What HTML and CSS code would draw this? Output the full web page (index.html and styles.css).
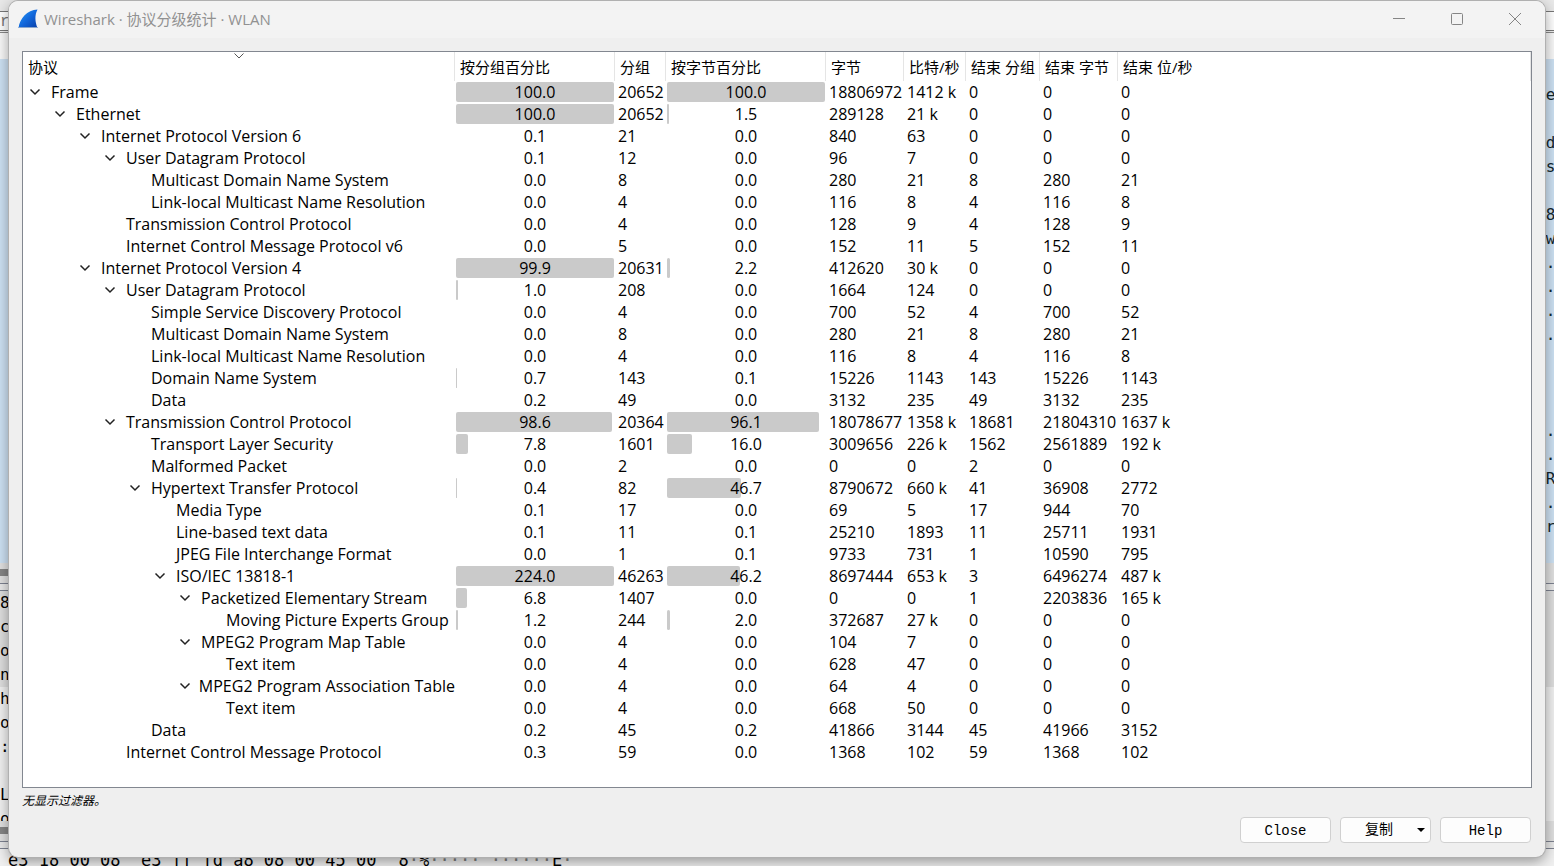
FILE: index.html
```html
<!DOCTYPE html>
<html lang="zh-CN">
<head>
  <meta charset="UTF-8">
  <meta name="viewport" content="width=device-width, initial-scale=1.0">
  <title>Wireshark · 协议分级统计 · WLAN</title>
  <link rel="stylesheet" href="styles.css">
</head>
<body>
  <!-- main window, mostly hidden by the dialog -->
  <div class="main-window">
    <div class="toolbar"></div>
    <div class="filter-bar">r</div>
    <div class="list-header"></div>
    <div class="packet-list">
      <pre>

ge

ed
 s

d8
uw
0.
1.
0.
0.



0.
0.
TR
6.
ir</pre>
    </div>
    <div class="scroll-edge"></div>
    <div class="splitter"></div>
    <div class="details">
      <pre>85
c
ol
nt
h
o
:

L
o</pre>
    </div>
    <div class="scroll-edge"></div>
    <div class="splitter"></div>
    <div class="hex-line">
      <pre>e3 18 00 08  e3 ff fd a8 08 00 45 00</pre>
      <pre>8<i>·</i>%<i>····· ······</i>E<i>·</i></pre>
    </div>
  </div>

  <div class="dialog">
    <div class="title-bar">
      <svg class="logo" viewBox="0 0 20 20">
        <defs>
          <linearGradient id="fin" x1="0" y1="0" x2="1" y2="1">
            <stop offset="0" stop-color="#2ba0f8"/>
            <stop offset="0.5" stop-color="#1268dc"/>
            <stop offset="1" stop-color="#0a3fa8"/>
          </linearGradient>
        </defs>
        <path d="M0.5 19C2 9 9 1 19.5 0.5C16.5 6 17 13 19.5 19Z" fill="url(#fin)"/>
        <path d="M0.5 18.5H19.5" stroke="#8aa6cc" stroke-width="1"/>
      </svg>
      <h1>Wireshark · 协议分级统计 · WLAN</h1>
      <div class="window-buttons">
        <button type="button" aria-label="最小化"><svg viewBox="0 0 14 14"><path d="M1 6.5H13"/></svg></button>
        <button type="button" aria-label="最大化"><svg viewBox="0 0 14 14"><rect x="1.5" y="1.5" width="11" height="11" rx="1"/></svg></button>
        <button type="button" aria-label="关闭"><svg viewBox="0 0 14 14"><path d="M1 1L13 13M13 1L1 13"/></svg></button>
      </div>
    </div>

    <div class="content">
      <div class="tree">
        <table>
          <colgroup>
            <col class="c-name"><col class="c-bar"><col class="c-packets"><col class="c-bar"><col class="c-bytes">
            <col class="c-bits"><col class="c-end-packets"><col class="c-end-bytes"><col>
          </colgroup>
          <thead>
            <tr>
              <th>协议<svg class="sort" viewBox="0 0 10 6"><path d="M0.5 0.5L5 5L9.5 0.5"/></svg></th>
              <th>按分组百分比</th>
              <th>分组</th>
              <th>按字节百分比</th>
              <th>字节</th>
              <th>比特/秒</th>
              <th>结束 分组</th>
              <th>结束 字节</th>
              <th>结束 位/秒</th>
            </tr>
          </thead>
          <tbody id="rows"></tbody>
        </table>
      </div>
      <p class="hint">无显示过滤器。</p>
      <div class="buttons">
        <button type="button">Close</button>
        <button type="button" class="copy">复制<span class="arrow"></span></button>
        <button type="button">Help</button>
      </div>
    </div>
  </div>

  <script>
    // level, has children, name, % packets, packets, % bytes, bytes, bits/s, end packets, end bytes, end bits/s
    const data = [
      [0, 1, 'Frame', '100.0', '20652', '100.0', '18806972', '1412 k', '0', '0', '0'],
      [1, 1, 'Ethernet', '100.0', '20652', '1.5', '289128', '21 k', '0', '0', '0'],
      [2, 1, 'Internet Protocol Version 6', '0.1', '21', '0.0', '840', '63', '0', '0', '0'],
      [3, 1, 'User Datagram Protocol', '0.1', '12', '0.0', '96', '7', '0', '0', '0'],
      [4, 0, 'Multicast Domain Name System', '0.0', '8', '0.0', '280', '21', '8', '280', '21'],
      [4, 0, 'Link-local Multicast Name Resolution', '0.0', '4', '0.0', '116', '8', '4', '116', '8'],
      [3, 0, 'Transmission Control Protocol', '0.0', '4', '0.0', '128', '9', '4', '128', '9'],
      [3, 0, 'Internet Control Message Protocol v6', '0.0', '5', '0.0', '152', '11', '5', '152', '11'],
      [2, 1, 'Internet Protocol Version 4', '99.9', '20631', '2.2', '412620', '30 k', '0', '0', '0'],
      [3, 1, 'User Datagram Protocol', '1.0', '208', '0.0', '1664', '124', '0', '0', '0'],
      [4, 0, 'Simple Service Discovery Protocol', '0.0', '4', '0.0', '700', '52', '4', '700', '52'],
      [4, 0, 'Multicast Domain Name System', '0.0', '8', '0.0', '280', '21', '8', '280', '21'],
      [4, 0, 'Link-local Multicast Name Resolution', '0.0', '4', '0.0', '116', '8', '4', '116', '8'],
      [4, 0, 'Domain Name System', '0.7', '143', '0.1', '15226', '1143', '143', '15226', '1143'],
      [4, 0, 'Data', '0.2', '49', '0.0', '3132', '235', '49', '3132', '235'],
      [3, 1, 'Transmission Control Protocol', '98.6', '20364', '96.1', '18078677', '1358 k', '18681', '21804310', '1637 k'],
      [4, 0, 'Transport Layer Security', '7.8', '1601', '16.0', '3009656', '226 k', '1562', '2561889', '192 k'],
      [4, 0, 'Malformed Packet', '0.0', '2', '0.0', '0', '0', '2', '0', '0'],
      [4, 1, 'Hypertext Transfer Protocol', '0.4', '82', '46.7', '8790672', '660 k', '41', '36908', '2772'],
      [5, 0, 'Media Type', '0.1', '17', '0.0', '69', '5', '17', '944', '70'],
      [5, 0, 'Line-based text data', '0.1', '11', '0.1', '25210', '1893', '11', '25711', '1931'],
      [5, 0, 'JPEG File Interchange Format', '0.0', '1', '0.1', '9733', '731', '1', '10590', '795'],
      [5, 1, 'ISO/IEC 13818-1', '224.0', '46263', '46.2', '8697444', '653 k', '3', '6496274', '487 k'],
      [6, 1, 'Packetized Elementary Stream', '6.8', '1407', '0.0', '0', '0', '1', '2203836', '165 k'],
      [7, 0, 'Moving Picture Experts Group', '1.2', '244', '2.0', '372687', '27 k', '0', '0', '0'],
      [6, 1, 'MPEG2 Program Map Table', '0.0', '4', '0.0', '104', '7', '0', '0', '0'],
      [7, 0, 'Text item', '0.0', '4', '0.0', '628', '47', '0', '0', '0'],
      [6, 1, 'MPEG2 Program Association Table', '0.0', '4', '0.0', '64', '4', '0', '0', '0'],
      [7, 0, 'Text item', '0.0', '4', '0.0', '668', '50', '0', '0', '0'],
      [4, 0, 'Data', '0.2', '45', '0.2', '41866', '3144', '45', '41966', '3152'],
      [3, 0, 'Internet Control Message Protocol', '0.3', '59', '0.0', '1368', '102', '59', '1368', '102']
    ];

    const chevron = '<svg class="chevron" viewBox="0 0 12 8"><path d="M1.5 1.5L6 6L10.5 1.5"/></svg>';

    function barCell(value) {
      const width = Math.min(Number(value), 100);
      return `<td class="bar-cell"><div class="bar" style="--value: ${width}%"><span>${value}</span></div></td>`;
    }

    document.getElementById('rows').innerHTML = data.map(row => {
      const [level, open, name, packetPct, packets, bytePct, ...rest] = row;
      return `<tr>
        <td class="name"><div style="--level: ${level}"><span class="toggle">${open ? chevron : ''}</span>${name}</div></td>
        ${barCell(packetPct)}
        <td>${packets}</td>
        ${barCell(bytePct)}
        ${rest.map(v => `<td>${v}</td>`).join('')}
      </tr>`;
    }).join('');
  </script>
</body>
</html>
```

FILE: styles.css
```css
* {
  box-sizing: border-box;
}

body {
  margin: 0;
  height: 100vh;
  overflow: hidden;
  position: relative;
  font-family: "Open Sans", "Noto Sans CJK SC", sans-serif;
  font-size: 15px;
  color: #000;
}

pre,
h1,
p {
  margin: 0;
}

/* main window behind */
.main-window {
  height: 100%;
  display: flex;
  flex-direction: column;
  background: #f0f0f0;
  font-family: "DejaVu Sans Mono", monospace;
}

.main-window pre {
  font-family: inherit;
  font-size: 16px;
  line-height: 24px;
}

.toolbar {
  height: 11px;
  background: #e8e8e8;
}

.filter-bar {
  height: 20px;
  border-top: 1px solid #777;
  border-bottom: 1px solid #777;
  background: #fff;
  font-family: "Liberation Mono", monospace;
  font-size: 16px;
  line-height: 20px;
  color: #777;
}

.list-header {
  height: 27px;
  margin-top: 1px;
  border-top: 1px solid #888;
  background: #f8f8f8;
}

.packet-list {
  flex: 1;
  display: flex;
  justify-content: flex-end;
  overflow: hidden;
  background: #cde1f3;
  color: #12272e;
}

.packet-list pre {
  width: 18px;
}

/* scroll thumb ends under the dialog */
.scroll-edge {
  height: 20px;
  padding-top: 6px;
  background: #e0e0e0;
}

.scroll-edge::before {
  content: "";
  display: block;
  width: 50%;
  height: 7px;
  background: #858585;
}

.splitter {
  height: 8px;
  border: 1px solid #7d8290;
  border-width: 1px 0;
  background: #e8e8e8;
}

.details {
  height: 230px;
  overflow: hidden;
  background: linear-gradient(#dedede 96px, #f0f0f0 96px);
}

.hex-line {
  height: 17px;
  display: flex;
  gap: 22px;
  padding-left: 8px;
  background: #f0f0f0;
}

.hex-line pre {
  font-size: 17px;
  line-height: 22px;
}

.hex-line i {
  font-style: normal;
  color: #808080;
}

/* dialog */
.dialog {
  position: absolute;
  inset: 1px 9px 9px;
  display: flex;
  flex-direction: column;
  overflow: hidden;
  background: #efefef;
  border-radius: 9px;
  box-shadow: 0 0 0 1px #b0b0b0, 0 4px 14px rgba(0, 0, 0, 0.4);
}

.title-bar {
  height: 37px;
  flex: none;
  display: flex;
  align-items: center;
  gap: 6px;
  padding: 0 1px 2px 9px;
  background: #f3f3f3;
}

.logo {
  width: 20px;
  height: 20px;
}

.title-bar h1 {
  flex: 1;
  font-size: 15px;
  font-weight: 400;
  line-height: 20px;
  color: #919191;
}

.window-buttons {
  display: flex;
}

.window-buttons button {
  width: 58px;
  height: 34px;
  display: grid;
  place-items: center;
  padding: 0;
  border: none;
  background: none;
}

.window-buttons svg {
  width: 14px;
  height: 14px;
  fill: none;
  stroke: #858585;
}

.content {
  flex: 1;
  display: flex;
  flex-direction: column;
  padding: 13px 13px 14px;
}

.tree {
  flex: 1;
  overflow: hidden;
  border: 1px solid #828790;
  background: #fff;
}

table {
  width: 100%;
  table-layout: fixed;
  border-collapse: separate;
  border-spacing: 0;
}

.c-name {
  width: 432px;
}

.c-bar {
  width: 160px;
}

.c-packets {
  width: 51px;
}

.c-bytes {
  width: 78px;
}

.c-bits {
  width: 62px;
}

.c-end-packets {
  width: 74px;
}

.c-end-bytes {
  width: 78px;
}

th {
  position: relative;
  height: 29px;
  padding: 1px 0 0 5px;
  border-right: 1px solid #e5e5e5;
  font-weight: 400;
  line-height: 20px;
  text-align: left;
  white-space: nowrap;
}

.sort {
  position: absolute;
  top: 1px;
  left: calc(50% - 5px);
  width: 10px;
  height: 6px;
  fill: none;
  stroke: #555;
}

td {
  height: 22px;
  padding: 0 0 0 3px;
  font-size: 16px;
  line-height: 22px;
  white-space: nowrap;
}

.name {
  padding: 0;
}

.name div {
  display: flex;
  padding-left: calc(var(--level) * 25px);
}

.toggle {
  width: 28px;
  display: flex;
  align-items: center;
  padding-left: 6px;
}

.chevron {
  width: 12px;
  height: 8px;
  fill: none;
  stroke: #222;
  stroke-width: 1.5;
}

.bar-cell {
  padding: 1px;
}

.bar {
  position: relative;
  height: 20px;
  line-height: 20px;
  text-align: center;
}

.bar::before {
  content: "";
  position: absolute;
  inset: 0 auto 0 0;
  width: round(var(--value), 1px);
  border-radius: 2px;
  background: #cacaca;
}

.bar span {
  position: relative;
}

.hint {
  height: 26px;
  font-size: 12px;
  font-style: italic;
  line-height: 26px;
}

.buttons {
  display: flex;
  justify-content: flex-end;
  gap: 9px;
  margin-top: 3px;
  padding-right: 1px;
}

.buttons button {
  width: 91px;
  height: 26px;
  padding: 0;
  border: 1px solid #d0d0d0;
  border-radius: 4px;
  background: #fdfdfd;
  font-family: "Liberation Mono", "Noto Sans CJK SC", monospace;
  font-size: 14px;
  line-height: 26px;
  color: #000;
}

.buttons .copy {
  display: flex;
  align-items: center;
  justify-content: flex-end;
  gap: 24px;
  padding-right: 5px;
}

.arrow {
  border: 4px solid transparent;
  border-top-color: #000;
  border-bottom: none;
}
```
